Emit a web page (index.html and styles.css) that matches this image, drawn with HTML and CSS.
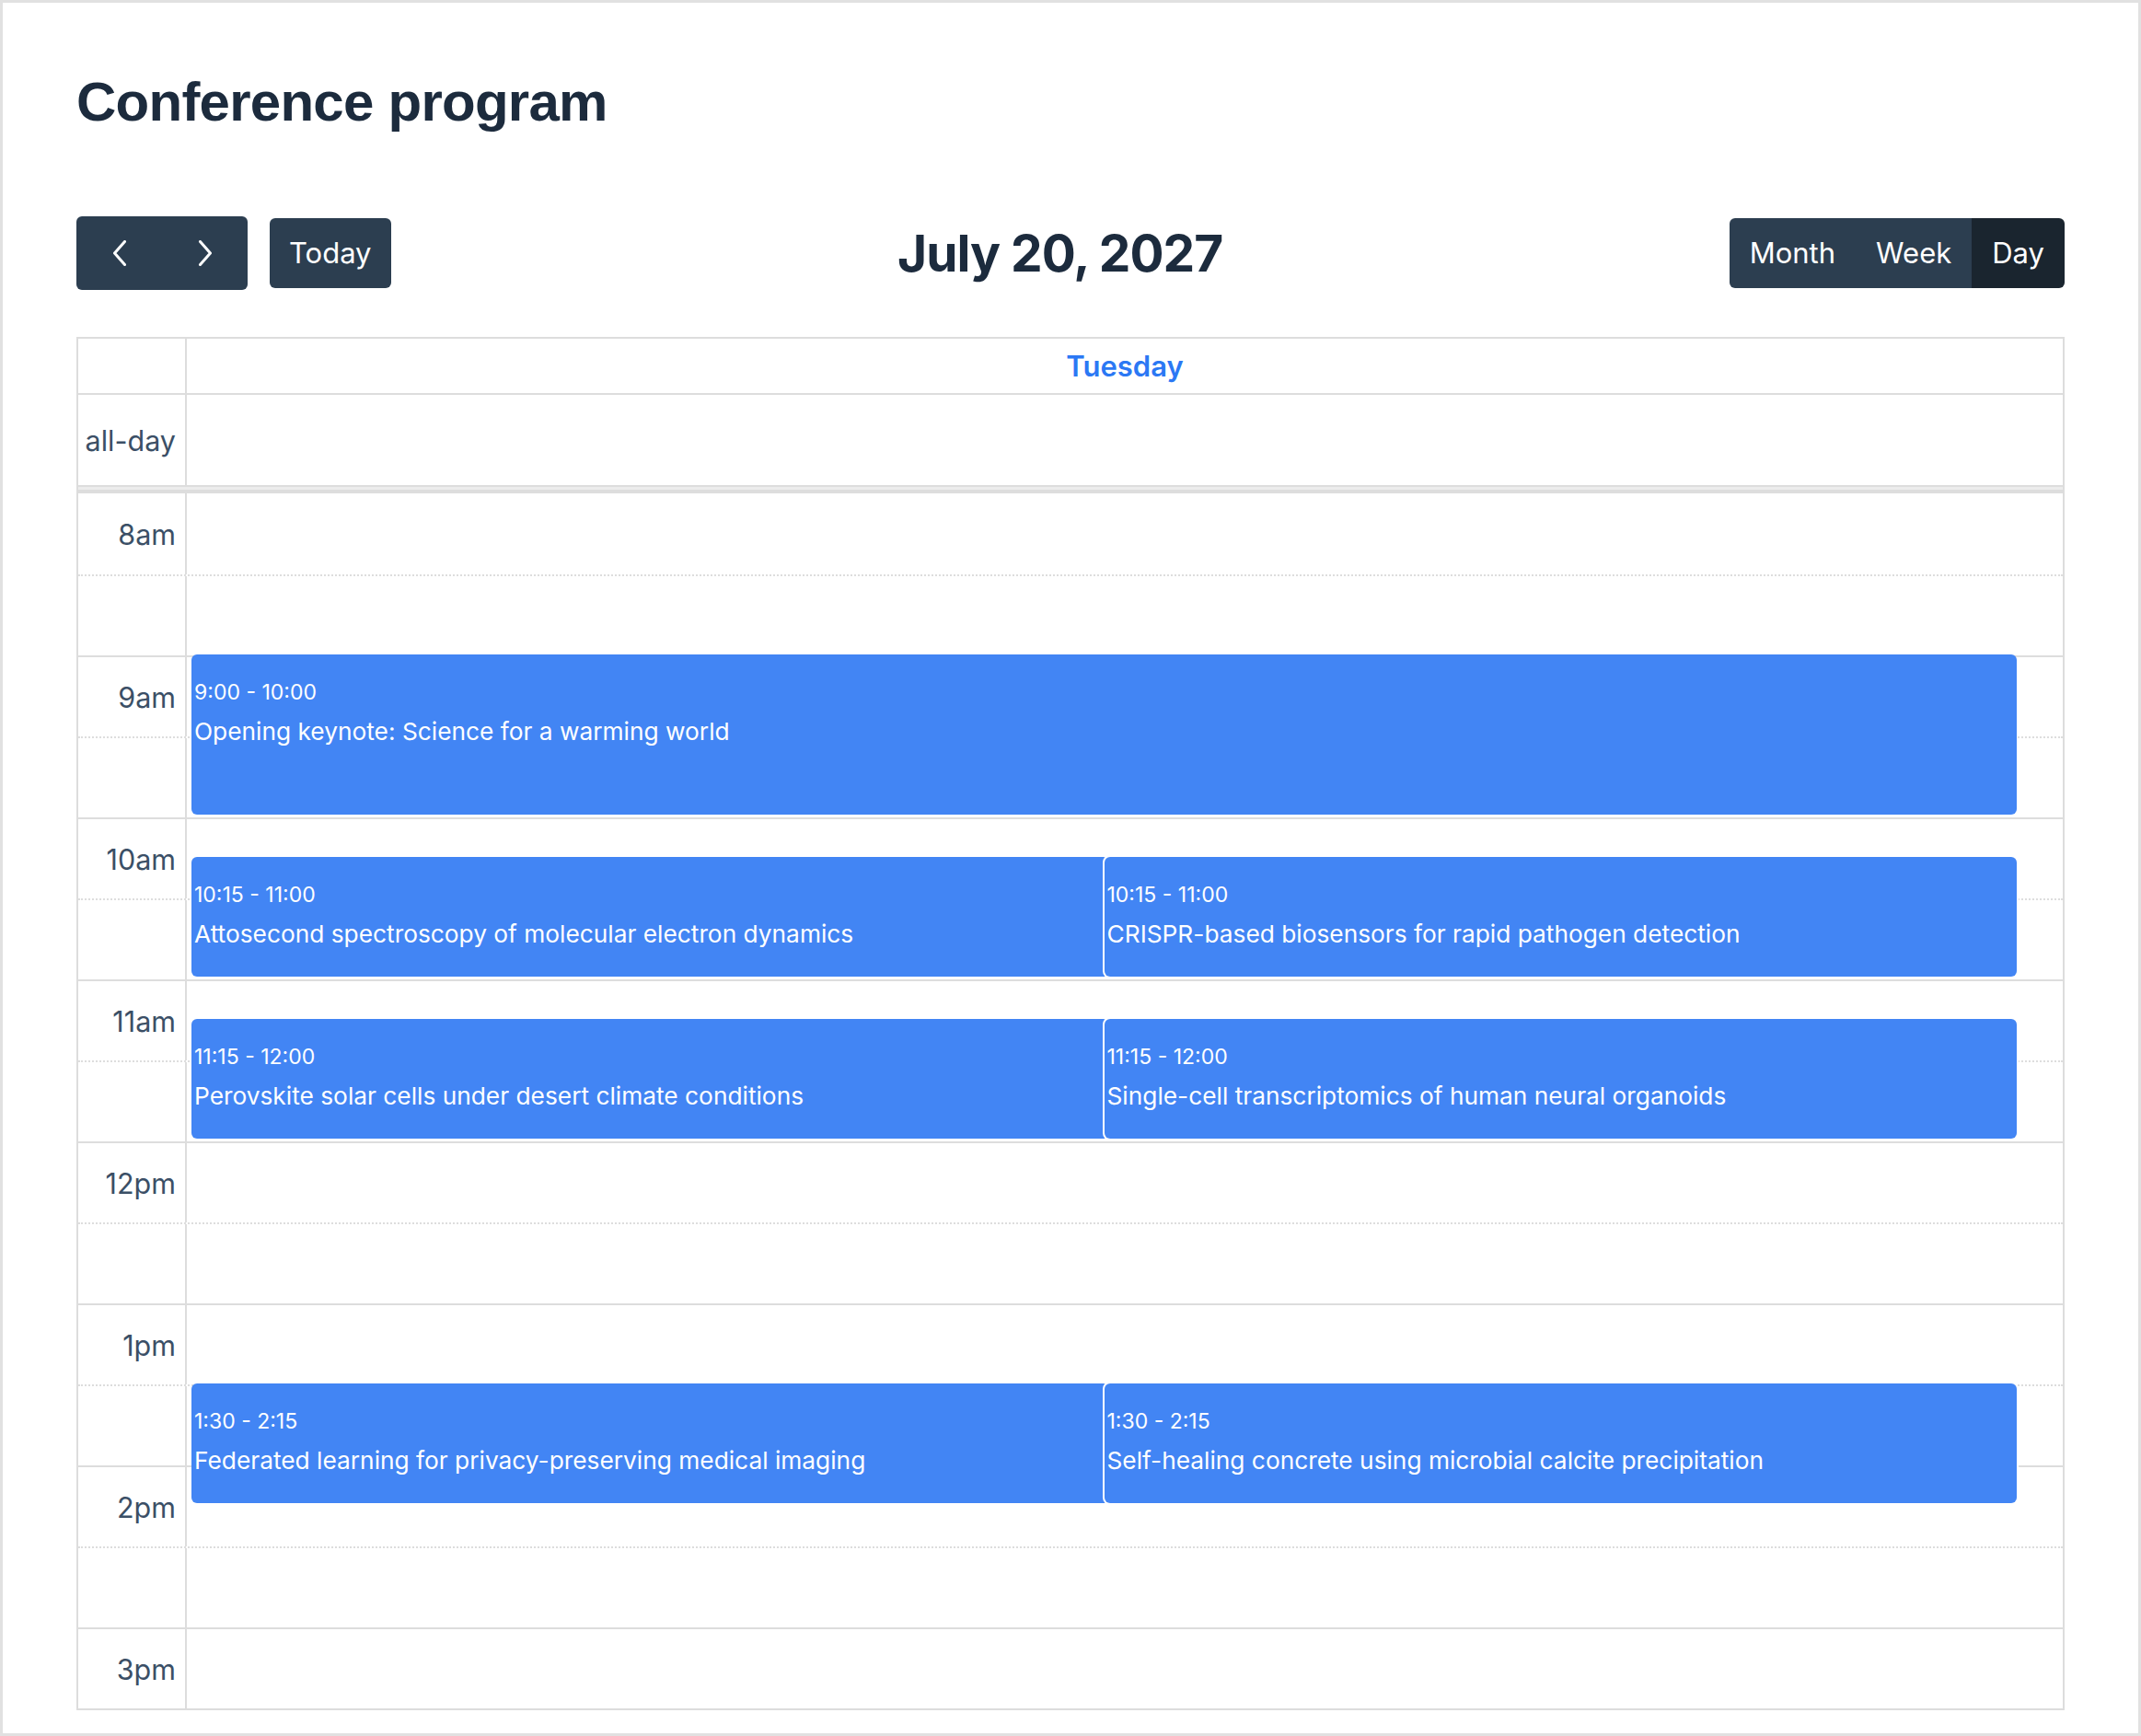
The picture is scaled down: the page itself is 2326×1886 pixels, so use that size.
FILE: index.html
```html
<!DOCTYPE html>
<html lang="en">
<head>
  <meta charset="UTF-8"/>
  <meta name="viewport" content="width=device-width, initial-scale=1.0"/>
  <title>Conference program</title>
  <link rel="stylesheet" href="styles.css">
</head>
<body>
<div class="page">

  <h1 class="page-title">Conference program</h1>

  <!-- Toolbar -->
  <div class="toolbar">
    <div class="toolbar-left">
      <div class="btn-group">
        <button class="btn btn-icon" aria-label="prev">
          <svg width="16" height="28" viewBox="0 0 16 28"><polyline points="13.5,1.5 2.5,14 13.5,26.5" fill="none" stroke="#fff" stroke-width="3" stroke-linecap="round" stroke-linejoin="round"/></svg>
        </button>
        <button class="btn btn-icon" aria-label="next">
          <svg width="16" height="28" viewBox="0 0 16 28"><polyline points="2.5,1.5 13.5,14 2.5,26.5" fill="none" stroke="#fff" stroke-width="3" stroke-linecap="round" stroke-linejoin="round"/></svg>
        </button>
      </div>
      <button class="btn">Today</button>
    </div>
    <h2 class="toolbar-title">July 20, 2027</h2>
    <div class="btn-group">
      <button class="btn">Month</button>
      <button class="btn">Week</button>
      <button class="btn active">Day</button>
    </div>
  </div>

  <!-- Day grid -->
  <div class="calendar">
    <div class="cal-head">
      <div class="axis"></div>
      <div class="day-name">Tuesday</div>
    </div>
    <div class="cal-allday">
      <div class="axis">all-day</div>
      <div></div>
    </div>
    <div class="divider"></div>
    <div class="slots" id="slots">
      <div class="events" id="events"></div>
    </div>
  </div>

</div>

<script>
  const SLOT_H = 88;
  const DAY_START = 8 * 60;
  const SLOT_COUNT = 15;

  const events = [
    { start: '09:00', end: '10:00', time: '9:00 - 10:00', title: 'Opening keynote: Science for a warming world', col: 'full' },
    { start: '10:15', end: '11:00', time: '10:15 - 11:00', title: 'Attosecond spectroscopy of molecular electron dynamics', col: 'left' },
    { start: '10:15', end: '11:00', time: '10:15 - 11:00', title: 'CRISPR-based biosensors for rapid pathogen detection', col: 'right' },
    { start: '11:15', end: '12:00', time: '11:15 - 12:00', title: 'Perovskite solar cells under desert climate conditions', col: 'left' },
    { start: '11:15', end: '12:00', time: '11:15 - 12:00', title: 'Single-cell transcriptomics of human neural organoids', col: 'right' },
    { start: '13:30', end: '14:15', time: '1:30 - 2:15', title: 'Federated learning for privacy-preserving medical imaging', col: 'left' },
    { start: '13:30', end: '14:15', time: '1:30 - 2:15', title: 'Self-healing concrete using microbial calcite precipitation', col: 'right' }
  ];

  const toMin = t => {
    const [h, m] = t.split(':').map(Number);
    return h * 60 + m;
  };

  const slotsEl = document.getElementById('slots');
  const eventsEl = document.getElementById('events');

  for (let i = 0; i < SLOT_COUNT; i++) {
    const min = DAY_START + i * 30;
    const h = Math.floor(min / 60);
    const isHour = min % 60 === 0;
    const label = isHour ? `${h % 12 || 12}${h < 12 ? 'am' : 'pm'}` : '';
    const row = document.createElement('div');
    row.className = isHour ? 'slot' : 'slot minor';
    row.innerHTML = `<div class="axis">${label}</div><div></div>`;
    slotsEl.insertBefore(row, eventsEl);
  }

  events.forEach(ev => {
    const top = (toMin(ev.start) - DAY_START) / 30 * SLOT_H - 1;
    const height = (toMin(ev.end) - toMin(ev.start)) / 30 * SLOT_H - 2;
    const card = document.createElement('div');
    card.className = `event ${ev.col}`;
    card.style.top = `${top}px`;
    card.style.height = `${height}px`;
    card.innerHTML = `
      <div class="event-time">${ev.time}</div>
      <div class="event-title">${ev.title}</div>
    `;
    eventsEl.appendChild(card);
  });
</script>
</body>
</html>
```

FILE: styles.css
```css
body { margin: 0; font-family: Inter, "Noto Sans", sans-serif; background: #fff; color: #1c2b3d; }

.page {
  box-sizing: border-box;
  height: 1886px;
  border: 3px solid #e1e1e1;
  padding: 72px 80px 0;
}

.page-title {
  margin: 0;
  font-family: "Liberation Sans", Arial, sans-serif;
  font-size: 60px;
  line-height: 72px;
  font-weight: bold;
  letter-spacing: -0.75px;
  color: #1c2b3d;
}

/* toolbar */
.toolbar {
  display: flex;
  justify-content: space-between;
  align-items: center;
  height: 80px;
  margin: 88px 0 51px;
}
.toolbar-left { display: flex; align-items: center; gap: 24px; }
.toolbar-title {
  margin: 0;
  font-size: 55px;
  line-height: 66px;
  font-weight: bold;
  letter-spacing: -1px;
  color: #1c2b3d;
}

.btn-group { display: flex; }
.btn {
  font-family: inherit;
  font-size: 31px;
  line-height: 48px;
  padding: 14px 21px;
  border: 0;
  border-radius: 6px;
  background: #2c3e50;
  color: #fff;
  cursor: pointer;
}
.btn-group .btn { border-radius: 0; padding: 14px 22px; }
.btn-group .btn:first-child { border-radius: 6px 0 0 6px; }
.btn-group .btn:last-child { border-radius: 0 6px 6px 0; }
.btn.active { background: #1a252f; }
.btn-group .btn-icon {
  width: 93px;
  height: 80px;
  padding: 0;
  display: flex;
  align-items: center;
  justify-content: center;
}

/* calendar grid */
.calendar { border: 2px solid #ddd; }

.cal-head,
.cal-allday,
.slot {
  display: grid;
  grid-template-columns: 118px 1fr;
  box-sizing: border-box;
}
.cal-head { height: 61px; border-bottom: 2px solid #ddd; }
.cal-allday { height: 100px; border-bottom: 2px solid #ddd; }
.divider { height: 3px; background: #ececec; border-bottom: 4px solid #ddd; }

.axis {
  box-sizing: border-box;
  border-right: 2px solid #ddd;
  display: flex;
  align-items: center;
  justify-content: flex-end;
  padding-right: 10px;
  font-size: 30.5px;
  color: #3b4f66;
}

.day-name {
  display: flex;
  align-items: center;
  justify-content: center;
  font-size: 31px;
  font-weight: 600;
  color: #2b78f4;
}

.slots { position: relative; }
.slot { height: 88px; border-top: 2px solid #ddd; }
.slot:first-child { border-top: 0; }
.slot.minor { border-top-style: dotted; }

/* events */
.events {
  position: absolute;
  top: 0;
  bottom: 0;
  left: 123px;
  right: 50px;
}
.event {
  position: absolute;
  left: 0;
  right: 0;
  box-sizing: border-box;
  padding: 23.5px 3px 0;
  background: #4285f4;
  border-radius: 6px;
  color: #fff;
  overflow: hidden;
}
.event.left { right: 49%; }
.event.right { left: 50%; box-shadow: 0 0 0 2px #fff; }
.event-time { font-size: 23px; line-height: 34px; }
.event-title { font-size: 26.3px; line-height: 40px; margin-top: 6px; white-space: nowrap; }
```
